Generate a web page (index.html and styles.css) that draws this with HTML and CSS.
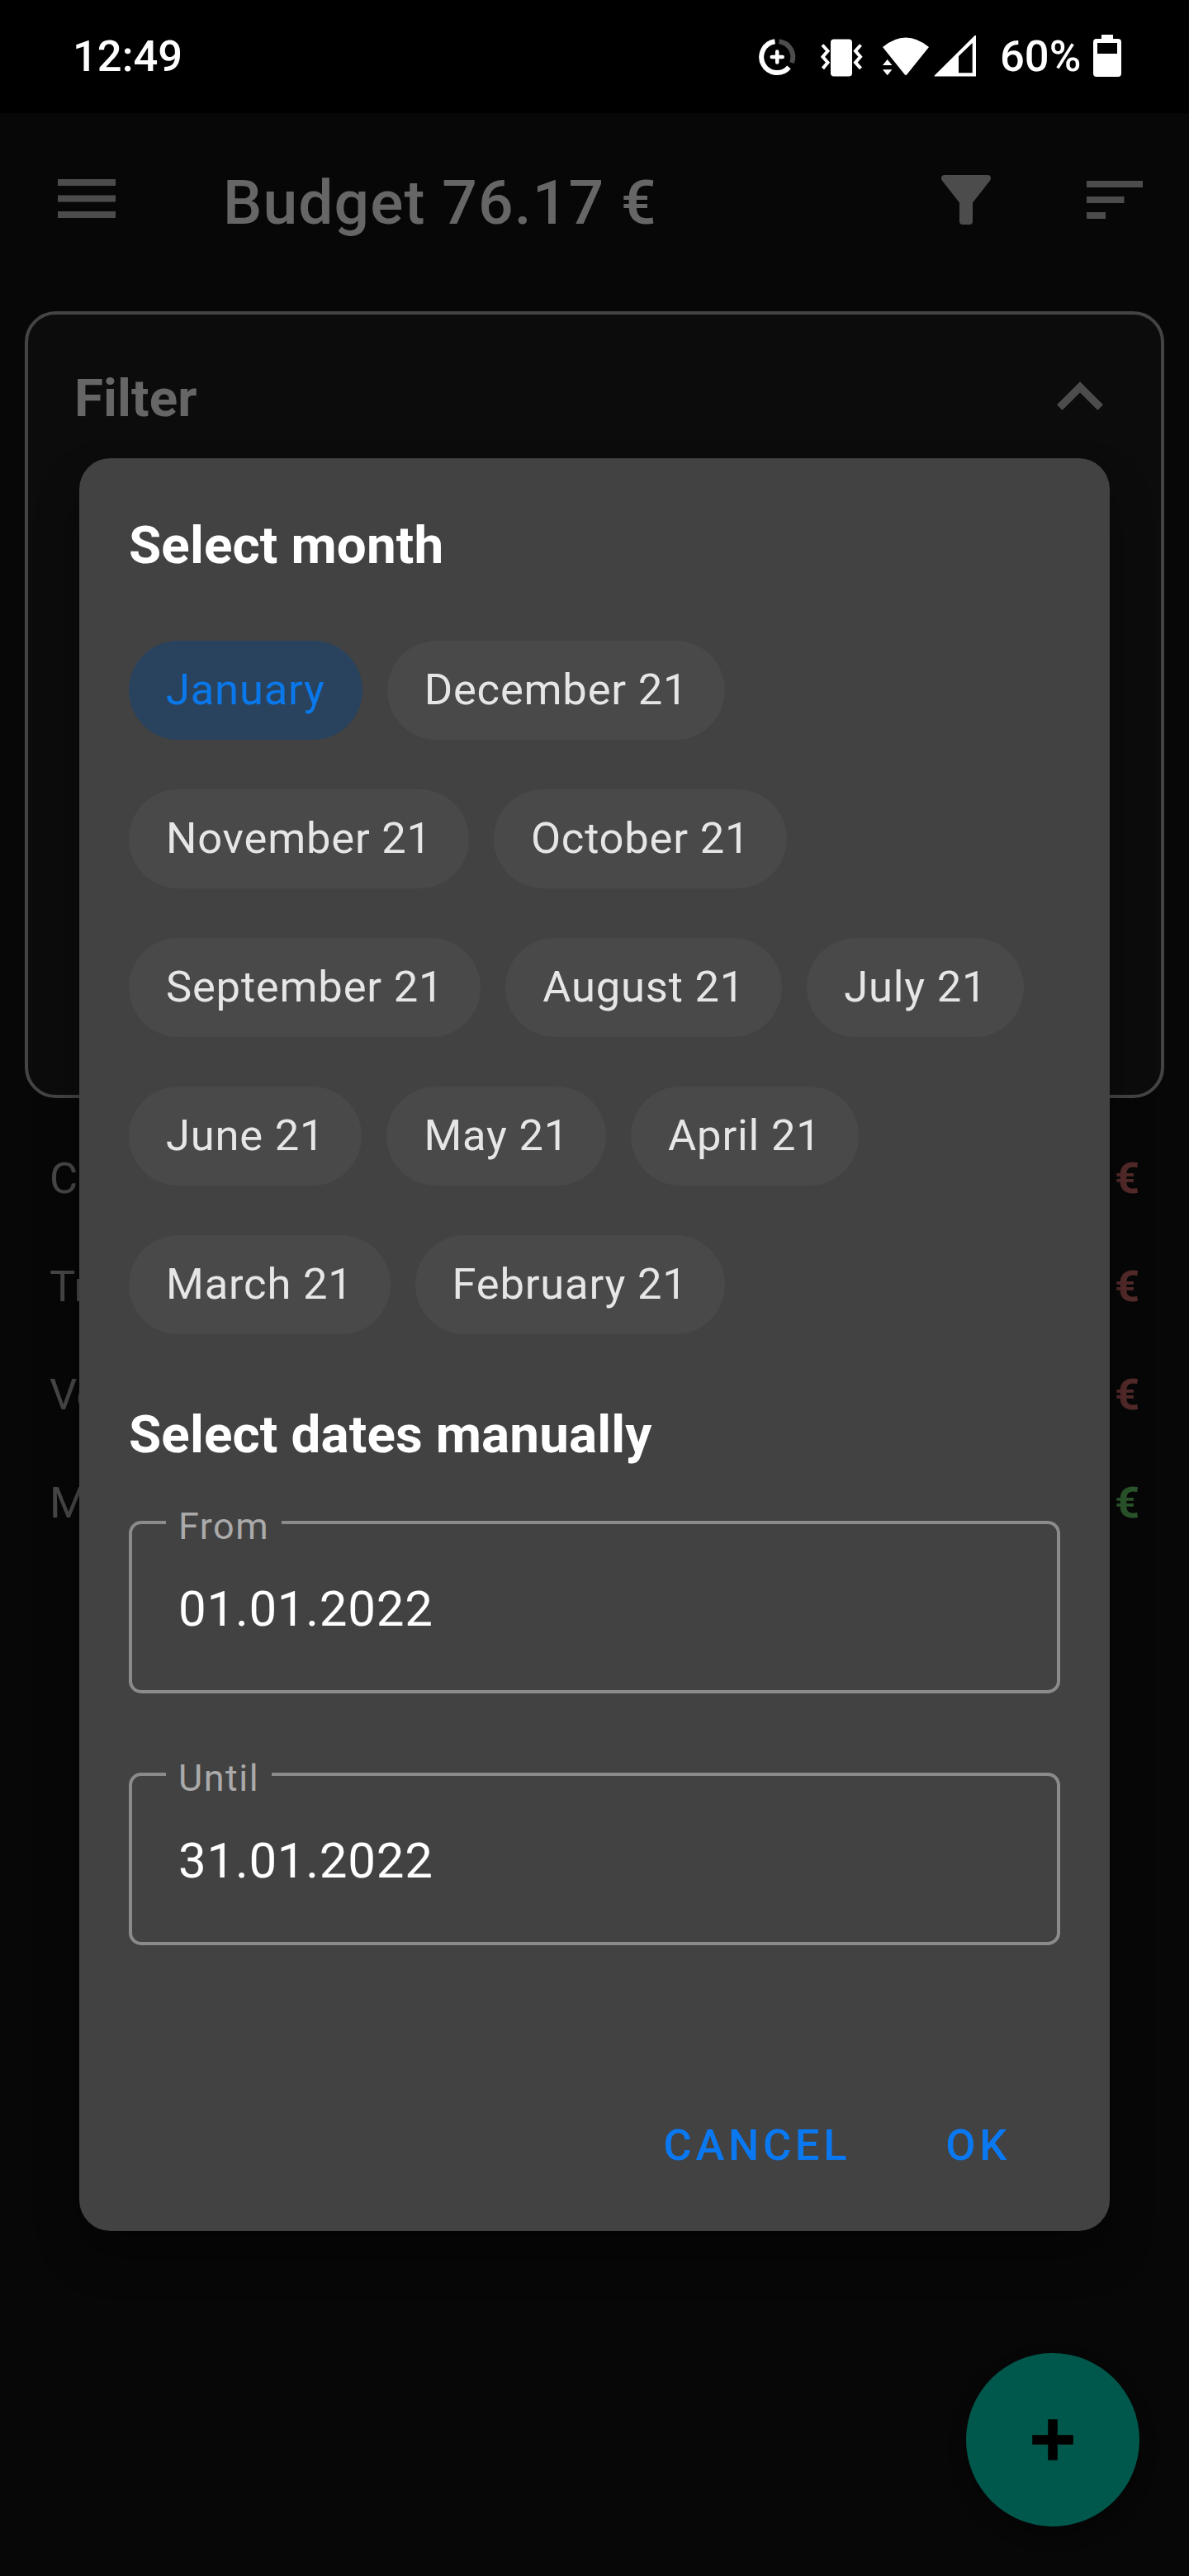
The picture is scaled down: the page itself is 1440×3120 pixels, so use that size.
FILE: index.html
```html
<!DOCTYPE html>
<html lang="en">
<head>
<meta charset="utf-8">
<title>Budget</title>
<link rel="stylesheet" href="styles.css">
</head>
<body>
<div class="screen">
  <header class="status">
    <span class="clock">12:49</span>
    <svg class="status-icons" width="280" height="80" viewBox="910 30 280 80">
      <path class="line" d="M938.5 50.2A19 19 0 1 0 955.5 81.5"/>
      <path class="line dim" d="M943.5 50.2A19 19 0 0 1 959 76"/>
      <path class="plus" d="M941.200 62.500v13M934.700 69h13"/>
      <rect class="solid" x="1006" y="47.500" width="26" height="45" rx="4"/>
      <path class="zig" d="M996 54.500l6.500 7.200-6 7 6 7-6 7.200M1042.500 54.500l-6.500 7.200 6 7-6 7 6.500 7.200"/>
      <path class="solid" d="M1069 57Q1097 34 1125 57L1098.500 90Q1097 92 1095.500 90Z"/>
      <path class="solid" d="M1069 79l5.700-7 5.700 7zM1069 84.300l5.700 7 5.700-7z"/>
      <path class="solid" fill-rule="evenodd" d="M1131.700 92.500V91.500L1180.500 43H1182V92.500ZM1161 68V88.300H1177.700V52Z"/>
    </svg>
    <span class="battery-text">60%</span>
    <svg class="battery" width="34" height="51" viewBox="0 0 34 51">
      <path class="solid" fill-rule="evenodd" d="M10 0H24V5H30Q34 5 34 9V47Q34 51 30 51H4Q0 51 0 47V9Q0 5 4 5H10ZM5 10V23H29V10Z"/>
    </svg>
  </header>

  <div class="appbar">
    <svg class="menu" width="70" height="48" viewBox="0 0 70 48"><path d="M0 0h70v8H0zM0 19.500h70v8H0zM0 39h70v8H0z"/></svg>
    <h1 class="title">Budget 76.17 €</h1>
    <svg class="funnel" width="60" height="60" viewBox="0 0 60 60"><path d="M4 0H56Q60 0 60 4 60 6 58 8L38 33.500V56Q38 60 34 60H26Q22 60 22 56V33.500L2 8Q0 6 0 4 0 0 4 0Z"/></svg>
    <svg class="sort" width="68" height="46" viewBox="0 0 68 46"><path d="M0 0h68v8H0zM0 19h45.500v8H0zM0 38h23v8H0z"/></svg>
  </div>

  <main class="content">
    <section class="filter-card">
      <h2 class="filter-title">Filter</h2>
      <svg class="chevron" width="56" height="35" viewBox="6 8 12 7.410"><path d="M12 8l-6 6 1.410 1.410L12 10.830l4.590 4.580L18 14z"/></svg>
    </section>
    <ul class="list">
      <li><span>C</span><b class="out">€</b></li>
      <li><span>Tr</span><b class="out">€</b></li>
      <li><span>Ve</span><b class="out">€</b></li>
      <li><span>M</span><b class="in">€</b></li>
    </ul>
  </main>

  <button class="fab" aria-label="Add">
    <svg width="50" height="50" viewBox="0 0 50 50"><path d="M25 6v38M6 25h38"/></svg>
  </button>

  <div class="dialog">
    <h2 class="heading">Select month</h2>
    <div class="chips">
      <span class="chip selected">January</span>
      <span class="chip">December 21</span>
      <span class="chip">November 21</span>
      <span class="chip">October 21</span>
      <span class="chip">September 21</span>
      <span class="chip">August 21</span>
      <span class="chip">July 21</span>
      <span class="chip">June 21</span>
      <span class="chip">May 21</span>
      <span class="chip">April 21</span>
      <span class="chip">March 21</span>
      <span class="chip">February 21</span>
    </div>
    <h2 class="heading second">Select dates manually</h2>
    <fieldset class="field"><legend>From</legend><span class="value">01.01.2022</span></fieldset>
    <fieldset class="field"><legend>Until</legend><span class="value">31.01.2022</span></fieldset>
    <div class="actions">
      <button class="action">CANCEL</button>
      <button class="action">OK</button>
    </div>
  </div>
</div>
</body>
</html>
```

FILE: styles.css
```css
* { box-sizing: border-box; }
body { margin: 0; background: #070707; font-family: Roboto, "Liberation Sans", sans-serif; }
h1, h2, ul { margin: 0; padding: 0; }
svg { display: block; flex: none; }
button { border: 0; padding: 0; background: none; font-family: inherit; }

.screen { position: relative; width: 1440px; height: 3120px; overflow: hidden; background: #070707; }

.status { display: flex; align-items: flex-start; height: 137px; background: #000; color: #fff; font-size: 52.5px; font-weight: 500; line-height: 62px; }
.clock { margin: 37px 0 0 88px; width: 822px; }
.status-icons { margin-top: 30px; }
.battery-text { margin: 37px 0 0 21px; width: 113px; white-space: nowrap; }
.battery { margin-top: 42px; }
.solid { fill: #fff; }
.line { fill: none; stroke: #fff; stroke-width: 6; }
.dim { stroke: #4d4d4d; }
.plus { fill: none; stroke: #fff; stroke-width: 4.5; stroke-linecap: round; }
.zig { fill: none; stroke: #fff; stroke-width: 4; }

.appbar { display: flex; align-items: flex-start; height: 240px; padding-left: 70px; fill: #4c4c4c; }
.menu { margin-top: 80px; }
.title { width: 870px; margin: 64px 0 0 130px; font-size: 75px; font-weight: 500; line-height: 88px; letter-spacing: 1.1px; color: #666; white-space: nowrap; }
.funnel { margin-top: 75px; }
.sort { margin: 82px 0 0 116px; }

.content { padding: 0 30px; }
.filter-card { display: flex; justify-content: space-between; height: 953px; padding: 0 70px 0 56px; border: 4px solid #444; border-radius: 37.5px; background: #0c0c0c; }
.filter-title { margin-top: 64px; font-size: 63.75px; font-weight: 700; line-height: 75px; letter-spacing: .12px; color: #666; }
.chevron { margin-top: 81px; fill: #4c4c4c; }

.list { margin-top: 31px; padding: 0 30px; list-style: none; font-size: 52.5px; color: #484848; }
.list li { display: flex; justify-content: space-between; height: 131.25px; align-items: center; }
.out { color: #552b2b; }
.in { color: #2b572c; }

.fab { position: absolute; left: 1170px; top: 2850px; width: 210px; height: 210px; border-radius: 50%; background: #00574b; display: flex; align-items: center; justify-content: center; box-shadow: 0 10px 20px rgba(0,0,0,.35); }
.fab path { fill: none; stroke: #000; stroke-width: 11.5; stroke-linecap: square; }

.dialog { position: absolute; left: 96px; top: 555px; width: 1248px; height: 2147px; padding: 68px 60px 0; border-radius: 37.5px; background: #424242; box-shadow: 0 30px 50px rgba(0,0,0,.35); }
.heading { font-size: 63.75px; font-weight: 700; line-height: 75px; letter-spacing: .12px; color: #fff; }
.chips { display: flex; flex-wrap: wrap; gap: 60px 30px; margin-top: 78px; }
.chip { height: 120px; padding: 0 45px; border-radius: 60px; background: #494949; color: #e6e6e6; font-size: 52.5px; line-height: 119px; letter-spacing: .8px; white-space: nowrap; }
.selected { background: #29435f; color: #0a78ea; }
.second { margin-top: 84px; }

.field { min-width: 0; height: 208.5px; margin: 67px 0 0; padding: 0; border: 4px solid #8b8b8b; border-radius: 15px; }
.field + .field { margin-top: 96.5px; }
.field legend { height: 4px; margin-left: 41px; padding: 0 15px; color: #aaa; font-size: 45px; line-height: 14px; letter-spacing: 1.5px; }
.value { display: block; margin: 68px 0 0 56px; color: #fff; font-size: 60px; line-height: 70px; letter-spacing: .72px; }

.actions { display: flex; justify-content: flex-end; gap: 115px; margin-top: 211px; padding-right: 60px; }
.action { color: #0a78f0; font-size: 52.5px; font-weight: 500; line-height: 62px; letter-spacing: 4.69px; }
```
